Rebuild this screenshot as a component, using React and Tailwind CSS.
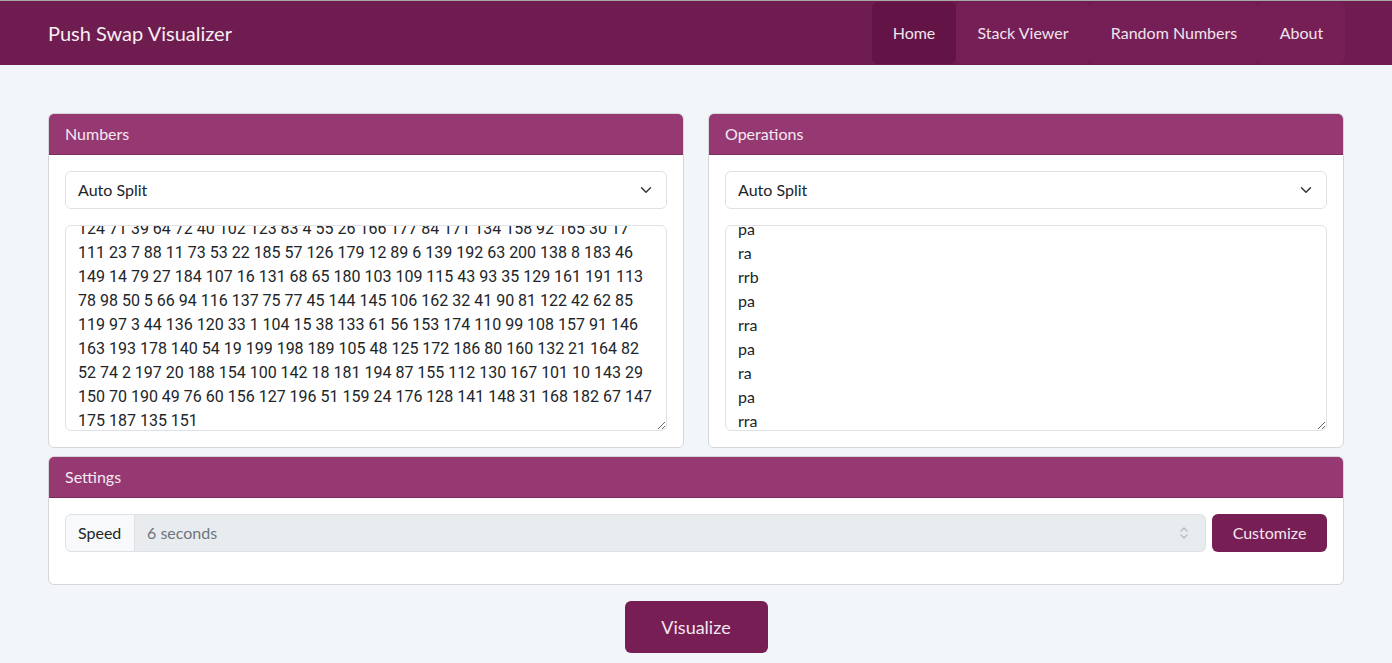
import { useLayoutEffect, useRef } from "react";

// Numbers textarea content, one visual line per entry
const NUMBER_LINES = [
  "95 36 152 9 118 58 173 25 121 47 169 13 86 114 34 195 59 117 28 170 69 37 96",
  "124 71 39 64 72 40 102 123 83 4 55 26 166 177 84 171 134 158 92 165 30 17",
  "111 23 7 88 11 73 53 22 185 57 126 179 12 89 6 139 192 63 200 138 8 183 46",
  "149 14 79 27 184 107 16 131 68 65 180 103 109 115 43 93 35 129 161 191 113",
  "78 98 50 5 66 94 116 137 75 77 45 144 145 106 162 32 41 90 81 122 42 62 85",
  "119 97 3 44 136 120 33 1 104 15 38 133 61 56 153 174 110 99 108 157 91 146",
  "163 193 178 140 54 19 199 198 189 105 48 125 172 186 80 160 132 21 164 82",
  "52 74 2 197 20 188 154 100 142 18 181 194 87 155 112 130 167 101 10 143 29",
  "150 70 190 49 76 60 156 127 196 51 159 24 176 128 141 148 31 168 182 67 147",
  "175 187 135 151",
];

const OPERATIONS = [
  "pb", "pb", "ra", "pb", "rb", "pb", "pb", "sa", "pb", "ra",
  "rb", "pb", "rrb", "pa", "ra", "pa", "rra", "pa", "rb", "pa",
  "ra", "rrb", "pa", "rra", "pa", "ra", "pa", "rra",
];

function Chevron() {
  return (
    <svg width="16" height="12" viewBox="0 0 16 16" fill="none" aria-hidden="true">
      <path
        d="m2 5 6 6 6-6"
        stroke="#343a40"
        strokeWidth="2"
        strokeLinecap="round"
        strokeLinejoin="round"
      />
    </svg>
  );
}

function UpDown() {
  return (
    <svg width="10" height="16" viewBox="0 0 10 16" fill="none" aria-hidden="true">
      <path d="M2 6l3-3 3 3M2 10l3 3 3-3" stroke="#b5b9bd" strokeWidth="1.3" strokeLinecap="round" strokeLinejoin="round" />
    </svg>
  );
}

// textarea that starts scrolled near its end, as in the app
function ScrolledArea({ value, className = "" }) {
  const ref = useRef(null);
  useLayoutEffect(() => {
    const el = ref.current;
    if (el) el.scrollTop = el.scrollHeight - el.clientHeight - 9;
  }, [value]);
  return (
    <textarea
      ref={ref}
      readOnly
      wrap="off"
      value={value}
      className={`block w-full h-[206px] px-3 py-1.5 border border-[#dee2e6] rounded-md bg-white
                 text-base leading-6 text-[#212529] overflow-hidden resize-y outline-none ${className}`}
    />
  );
}

function Card({ title, children, className = "" }) {
  return (
    <div className={`bg-white border border-[#d6d6da] rounded-md overflow-hidden ${className}`}>
      <div className="h-[41px] px-4 flex items-center bg-[#963973] border-b border-[#7a2c5d] text-[#f4e9f0] text-base">
        {title}
      </div>
      {children}
    </div>
  );
}

function SplitSelect() {
  return (
    <div className="h-[38px] flex items-center justify-between px-3 border border-[#dee2e6] rounded-md bg-white text-base text-[#212529] mb-4">
      <span>Auto Split</span>
      <Chevron />
    </div>
  );
}

const NAV = [
  { label: "Home", width: "w-[84px]", active: true },
  { label: "Stack Viewer", width: "w-[134px]" },
  { label: "Random Numbers", width: "w-[168px]" },
  { label: "About", width: "w-[87px]" },
];

export default function App() {
  return (
    <div className="min-h-[663px] bg-[#f3f6f9] font-['Lato','Noto_Sans',sans-serif]">
      {/* Navbar */}
      <nav className="border-t border-[#a7a7a7] bg-[#6f1c50]">
        <div className="max-w-[1320px] mx-auto px-3 h-16 flex items-center justify-between">
          <span className="text-xl text-[#f6eef3]">Push Swap Visualizer</span>
          <ul className="flex h-[62px] mr-[-1px]">
            {NAV.map((item) => (
              <li
                key={item.label}
                className={`${item.width} flex items-center justify-center rounded-md text-[#efe4ec] ${
                  item.active ? "bg-[#631346]" : "bg-[#761f56]"
                }`}
              >
                {item.label}
              </li>
            ))}
          </ul>
        </div>
      </nav>

      <main className="max-w-[1320px] mx-auto px-3 pt-12">
        <div className="grid grid-cols-2 gap-6">
          <Card title="Numbers">
            <div className="p-4">
              <SplitSelect />
              <ScrolledArea
                value={NUMBER_LINES.join("\n")}
                className="font-['Roboto','Noto_Sans',sans-serif]"
              />
            </div>
          </Card>
          <Card title="Operations">
            <div className="p-4">
              <SplitSelect />
              <ScrolledArea value={OPERATIONS.join("\n")} />
            </div>
          </Card>
        </div>

        <Card title="Settings" className="mt-2">
          <div className="p-4 pb-8 flex gap-1.5">
            <div className="flex-1 flex h-[38px]">
              <span className="w-[70px] px-3 flex items-center border border-[#dee2e6] rounded-l-md bg-[#f8f9fa] text-base text-[#212529]">
                Speed
              </span>
              <div className="flex-1 flex items-center justify-between pl-3 pr-4 border border-l-0 border-[#dee2e6] rounded-r-md bg-[#e9ecef] text-base text-[#6c757d]">
                <span>6 seconds</span>
                <UpDown />
              </div>
            </div>
            <button className="w-[115px] h-[38px] rounded-md bg-[#771e55] text-[#f3e6ee] text-base">
              Customize
            </button>
          </div>
        </Card>

        <div className="flex justify-center pt-4 pb-4">
          <button className="w-[143px] h-[52px] rounded-md bg-[#771e55] text-[#f3e6ee] text-lg">
            Visualize
          </button>
        </div>
      </main>
    </div>
  );
}
